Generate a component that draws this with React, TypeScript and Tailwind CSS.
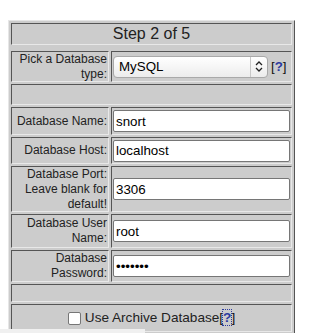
import React from "react";

const cell =
  "border border-t-[#555] border-l-[#555] border-b-[#e8e8e8] border-r-[#e8e8e8]";

function Help({ focused }: { focused?: boolean }) {
  return (
    <span className="text-[#111]">
      [
      <a
        href="#"
        className={`font-bold text-[#2b3aa0] no-underline ${focused ? "outline outline-1 outline-dotted outline-[#2b3aa0]" : ""}`}
      >
        ?
      </a>
      ]
    </span>
  );
}

function Field({ label, value, type = "text", h }: { label: React.ReactNode; value: string; type?: string; h: string }) {
  return (
    <div className={`flex gap-[2px] ${h}`}>
      <div className={`${cell} w-[98px] shrink-0 flex items-center justify-end text-right text-[12px] leading-[15px] px-[1px]`}>
        <span>{label}</span>
      </div>
      <div className={`${cell} flex-1 flex items-center px-[1px]`}>
        <input
          type={type}
          defaultValue={value}
          className="w-full h-[22px] bg-white border border-[#767676] rounded-[2px] px-[2px] text-[13.333px] text-black outline-none"
        />
      </div>
    </div>
  );
}

export default function App() {
  return (
    <div className="relative min-h-screen bg-white pt-[20px] pl-[8px] font-['Liberation_Sans',Arial,sans-serif] text-[#222]">
      <div className="w-[287px] bg-[#cccccc] border border-t-[#e6e6e6] border-l-[#e6e6e6] border-b-[#555] border-r-[#555] p-[2px] flex flex-col gap-[2px]">
        <div className={`${cell} h-[22px] flex items-center justify-center text-[16px] mb-[4px]`}>
          Step 2 of 5
        </div>

        <div className="flex gap-[2px] h-[31px]">
          <div className={`${cell} w-[98px] shrink-0 flex items-center justify-end text-right text-[12px] leading-[15px] px-[1px]`}>
            <span>Pick a Database<br />type:</span>
          </div>
          <div className={`${cell} flex-1 flex items-center gap-[3px] px-[1px]`}>
            <div className="w-[155px] h-[22px] rounded-[4px] border border-[#a9a9a9] bg-gradient-to-b from-white to-[#ececec] flex items-center text-[13.333px] text-black">
              <span className="flex-1 pl-[5px]">MySQL</span>
              <span className="h-full border-l border-[#c8c8c8] w-[17px] flex items-center justify-center">
                <svg width="8" height="11" viewBox="0 0 8 11" fill="none" stroke="#222" strokeWidth="1.3">
                  <path d="M1 4 L4 1 L7 4" />
                  <path d="M1 7 L4 10 L7 7" />
                </svg>
              </span>
            </div>
            <span className="text-[13.333px]"><Help /></span>
          </div>
        </div>

        <div className={`${cell} h-[21px]`} />

        <Field label="Database Name:" value="snort" h="h-[28px]" />
        <Field label="Database Host:" value="localhost" h="h-[27px]" />
        <Field label={<>Database Port:<br />Leave blank for<br />default!</>} value="3306" h="h-[46px]" />
        <Field label={<>Database User<br />Name:</>} value="root" h="h-[34px]" />
        <Field label={<>Database<br />Password:</>} value="1234567" type="password" h="h-[32px]" />

        <div className={`${cell} h-[18px]`} />

        <div className={`${cell} h-[28px] flex items-center justify-center text-[13.6px]`}>
          <input type="checkbox" className="w-[13px] h-[13px] mr-[4px] appearance-none bg-white border border-[#767676] rounded-[2px]" />
          <span>Use Archive Database</span>
          <Help focused />
        </div>
      </div>
      <div className="absolute left-0 top-[329px] w-[145px] h-[4px] bg-[#f0f0f0]" />
    </div>
  );
}
